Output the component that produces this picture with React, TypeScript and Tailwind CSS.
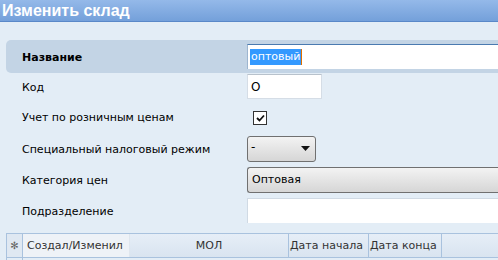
import React from 'react';

const labelFont = { fontFamily: '"DejaVu Sans", Tahoma, sans-serif' };

function Row({ label, bold, band, children, h }: { label: string; bold?: boolean; band?: boolean; children?: React.ReactNode; h: string }) {
  return (
    <div
      className={`flex items-center ${h} ${band ? 'bg-[#c3d4e5] rounded-l-[5px]' : ''}`}
    >
      <div className={`w-[241px] pl-4 pt-[3px] text-[11px] text-black ${bold ? 'font-bold' : ''}`}>{label}</div>
      <div className="flex-1 flex items-center">{children}</div>
    </div>
  );
}

export default function App() {
  return (
    <div className="w-[498px] h-[260px] overflow-hidden bg-[#e3edf6]" style={labelFont}>
      {/* Header */}
      <div className="h-[22px] bg-gradient-to-b from-[#94b9e9] to-[#74a0da] border-b border-[#5a88c8] flex items-center pl-[2px]">
        <span className="text-white font-bold text-[16px] leading-none" style={{ fontFamily: '"Liberation Sans", Arial, sans-serif' }}>
          Изменить склад
        </span>
      </div>

      {/* Form */}
      <div className="pl-[6px] pt-[18px]">
        <Row label="Название" bold band h="h-[33px]">
          <div className="h-[25px] flex-1 bg-white border-t border-t-[#4a7ab0] border-l border-l-[#9db5cf] flex items-center pl-[2px]">
            <span className="bg-[#3399ff] text-white text-[11px] leading-[16px] px-[1px]">оптовый</span>
            <span className="w-[1px] h-[16px] bg-[#e07000]" />
          </div>
        </Row>
        <Row label="Код" h="h-[27px]">
          <div className="w-[75px] h-[25px] bg-white border border-[#d5dde6] border-t-[#b8c2cc] flex items-center pl-[3px] text-[12px]">
            О
          </div>
        </Row>
        <Row label="Учет по розничным ценам" h="h-[33px]">
          <div className="ml-[6px] mt-[3px] w-[14px] h-[14px] bg-white border border-[#333] flex items-center justify-center">
            <svg width="9" height="8" viewBox="0 0 9 8">
              <path d="M1 4 L3.5 6.5 L8 1.5" stroke="#111" strokeWidth="1.8" fill="none" />
            </svg>
          </div>
        </Row>
        <Row label="Специальный налоговый режим" h="h-[31px]">
          <div className="w-[69px] h-[26px] rounded-[3px] border border-[#707070] bg-gradient-to-b from-[#f3f3f3] to-[#d6d6d6] flex items-center justify-between px-[3px]">
            <span className="text-[12px] leading-none -mt-[4px]">-</span>
            <svg width="9" height="5" viewBox="0 0 9 5" className="mr-[2px]">
              <path d="M0 0 L9 0 L4.5 5 Z" fill="#111" />
            </svg>
          </div>
        </Row>
        <Row label="Категория цен" h="h-[31px]">
          <div className="flex-1 h-[26px] rounded-l-[3px] border border-r-0 border-[#707070] bg-gradient-to-b from-[#f3f3f3] to-[#d6d6d6] flex items-center px-[4px] pt-[1px] text-[11px]">
            Оптовая
          </div>
        </Row>
        <Row label="Подразделение" h="h-[31px]">
          <div className="flex-1 h-[25px] bg-white border-t border-l border-[#d0dae4]" />
        </Row>

        {/* Table */}
        <div className="mt-[7px] border-t border-l border-[#a9c2de] flex h-[24px] text-[11px] text-[#333] whitespace-nowrap">
          <div className="w-[16px] bg-[#dfe8f2] border-r border-[#a9c2de] flex items-center justify-center text-[10px] text-[#666]">✻</div>
          <div className="w-[107px] bg-[#eef2f7] border-r border-[#dfe6ee] flex items-center pl-[4px] pt-[1px] overflow-hidden">Создал/Изменил</div>
          <div className="w-[159px] bg-gradient-to-b from-[#e6eef7] to-[#d9e4f0] border-r border-[#a9c2de] flex items-center justify-center pt-[1px]">МОЛ</div>
          <div className="w-[80px] bg-gradient-to-b from-[#e6eef7] to-[#d9e4f0] border-r border-[#a9c2de] flex items-center pl-[1px] pt-[1px] overflow-hidden">Дата начала</div>
          <div className="w-[73px] bg-gradient-to-b from-[#e6eef7] to-[#d9e4f0] border-r border-[#a9c2de] flex items-center pl-[1px] pt-[1px] overflow-hidden">Дата конца</div>
          <div className="flex-1 bg-gradient-to-b from-[#e6eef7] to-[#d9e4f0]" />
        </div>
        <div className="h-[4px] border-t border-l border-[#a9c2de] flex">
          <div className="w-[16px] border-r border-[#a9c2de]" />
        </div>
      </div>
    </div>
  );
}
